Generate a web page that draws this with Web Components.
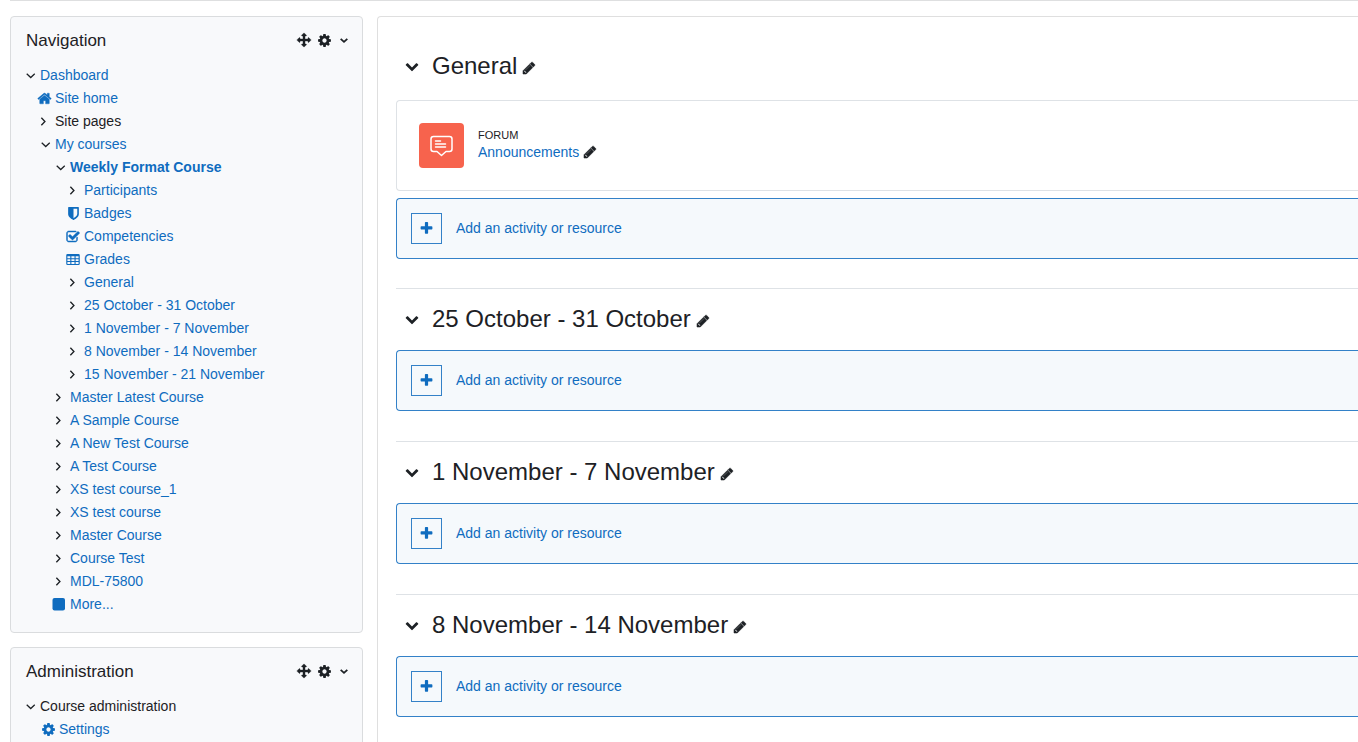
<!DOCTYPE html>
<html lang="en">
<head>
<meta charset="utf-8">
<title>Weekly Format Course</title>
<style>
  html { scrollbar-width: none; }
  body {
    --link: #0f6cbf;
    --ink: #1d2125;
    --card-line: #dadcde;
    margin: 0;
    background: #fff;
    color: var(--ink);
    font: 14px/23px "Liberation Sans", Arial, sans-serif;
  }
</style>
</head>
<body>
<course-page>
  <side-block slot="side" heading="Navigation">
    <tree-row icon="down" href="#dashboard">Dashboard</tree-row>
    <tree-row level="1" icon="home" href="#home">Site home</tree-row>
    <tree-row level="1" icon="right">Site pages</tree-row>
    <tree-row level="1" icon="down" href="#courses">My courses</tree-row>
    <tree-row level="2" icon="down" href="#weekly" current>Weekly Format Course</tree-row>
    <tree-row level="3" icon="right" href="#participants">Participants</tree-row>
    <tree-row level="3" icon="shield" href="#badges">Badges</tree-row>
    <tree-row level="3" icon="check" href="#competencies">Competencies</tree-row>
    <tree-row level="3" icon="table" href="#grades">Grades</tree-row>
    <tree-row level="3" icon="right" href="#general">General</tree-row>
    <tree-row level="3" icon="right" href="#w1">25 October - 31 October</tree-row>
    <tree-row level="3" icon="right" href="#w2">1 November - 7 November</tree-row>
    <tree-row level="3" icon="right" href="#w3">8 November - 14 November</tree-row>
    <tree-row level="3" icon="right" href="#w4">15 November - 21 November</tree-row>
    <tree-row level="2" icon="right" href="#c1">Master Latest Course</tree-row>
    <tree-row level="2" icon="right" href="#c2">A Sample Course</tree-row>
    <tree-row level="2" icon="right" href="#c3">A New Test Course</tree-row>
    <tree-row level="2" icon="right" href="#c4">A Test Course</tree-row>
    <tree-row level="2" icon="right" href="#c5">XS test course_1</tree-row>
    <tree-row level="2" icon="right" href="#c6">XS test course</tree-row>
    <tree-row level="2" icon="right" href="#c7">Master Course</tree-row>
    <tree-row level="2" icon="right" href="#c8">Course Test</tree-row>
    <tree-row level="2" icon="right" href="#c9">MDL-75800</tree-row>
    <tree-row level="2" icon="square" href="#more">More...</tree-row>
  </side-block>
  <side-block slot="side" heading="Administration">
    <tree-row icon="down">Course administration</tree-row>
    <tree-row level="1" icon="cog" href="#settings" wide>Settings</tree-row>
  </side-block>

  <course-section heading="General" first>
    <course-activity kind="Forum">Announcements</course-activity>
  </course-section>
  <course-section heading="25 October - 31 October"></course-section>
  <course-section heading="1 November - 7 November"></course-section>
  <course-section heading="8 November - 14 November"></course-section>
</course-page>

<script>
const ICONS = {
  move: '<path d="M1792 896q0 26-19 45l-256 256q-19 19-45 19t-45-19-19-45v-128h-384v384h128q26 0 45 19t19 45-19 45l-256 256q-19 19-45 19t-45-19l-256-256q-19-19-19-45t19-45 45-19h128v-384h-384v128q0 26-19 45t-45 19-45-19l-256-256q-19-19-19-45t19-45l256-256q19-19 45-19t45 19 19 45v128h384v-384h-128q-26 0-45-19t-19-45 19-45l256-256q19-19 45-19t45 19l256 256q19 19 19 45t-19 45-45 19h-128v384h384v-128q0-26 19-45t45-19 45 19l256 256q19 19 19 45z" stroke="currentColor" stroke-width="50"/>',
  cog: '<path d="M1152 896q0-106-75-181t-181-75-181 75-75 181 75 181 181 75 181-75 75-181zm512-109v222q0 12-8 23t-20 13l-185 28q-19 54-39 91 35 50 107 138 10 12 10 25t-9 23q-27 37-99 108t-94 71q-12 0-26-9l-138-108q-44 23-91 38-16 136-29 186-7 28-36 28h-222q-14 0-24.500-8.500t-11.500-21.500l-28-184q-49-16-90-37l-141 107q-10 9-25 9-14 0-25-11-126-114-165-168-7-10-7-23 0-12 8-23 15-21 51-66.500t54-70.500q-27-50-41-99l-183-27q-13-2-21-12.500t-8-23.500v-222q0-12 8-23t19-13l186-28q14-46 39-92-40-57-107-138-10-12-10-24 0-10 9-23 26-36 98.500-107.500t94.500-71.500q13 0 26 10l138 107q44-23 91-38 16-136 29-186 7-28 36-28h222q14 0 24.500 8.500t11.500 21.500l28 184q49 16 90 37l142-107q9-9 24-9 13 0 25 10 129 119 165 170 7 8 7 22 0 12-8 23-15 21-51 66.500t-54 70.500q26 50 41 98l183 28q13 2 21 12.500t8 23.500z"/>',
  home: '<path d="M1472 992v480q0 26-19 45t-45 19h-384v-384h-256v384h-384q-26 0-45-19t-19-45v-480q0-1 .5-3t.5-3l575-474 575 474q1 2 1 6zm223-69l-62 74q-8 9-21 11h-3q-13 0-21-7l-692-577-692 577q-12 8-24 7-13-2-21-11l-62-74q-8-10-7-23.500t11-21.500l719-599q32-26 76-26t76 26l244 204v-195q0-14 9-23t23-9h192q14 0 23 9t9 23v408l219 182q10 8 11 21.500t-7 23.500z" stroke="currentColor" stroke-width="40"/>',
  check: '<path d="M1472 930v318q0 119-84.500 203.500t-203.500 84.500h-832q-119 0-203.500-84.500t-84.500-203.500v-832q0-119 84.500-203.500t203.500-84.500h832q63 0 117 25 15 7 18 23 3 17-9 29l-49 49q-10 10-23 10-3 0-9-2-23-6-45-6h-832q-66 0-113 47t-47 113v832q0 66 47 113t113 47h832q66 0 113-47t47-113v-254q0-13 9-22l64-64q10-10 23-10 6 0 12 3 20 8 20 29zm231-489l-814 814q-24 24-57 24t-57-24l-430-430q-24-24-24-57t24-57l110-110q24-24 57-24t57 24l263 263 647-647q24-24 57-24t57 24l110 110q24 24 24 57t-24 57z" stroke="currentColor" stroke-width="60"/>',
  shield: '<path d="M1344 960v-640h-448v1137q119-63 213-137 235-184 235-360zm192-768v768q0 86-33.500 170.500t-83 150-118 127.500-126.500 103-121 77.500-89.500 49.500-42.500 20q-12 6-26 6t-26-6q-16-7-42.500-20t-89.500-49.500-121-77.500-126.500-103-118-127.500-83-150-33.500-170.500v-768q0-26 19-45t45-19h1152q26 0 45 19t19 45z"/>',
  table: '<path fill-rule="evenodd" d="M192 128h1408q160 0 160 160v1088q0 160-160 160h-1408q-160 0-160-160v-1088q0-160 160-160zM180 416v240h370v-240zM690 416v240h400v-240zM1230 416v240h380v-240zM180 786v240h370v-240zM690 786v240h400v-240zM1230 786v240h380v-240zM180 1156v240h370v-240zM690 1156v240h400v-240zM1230 1156v240h380v-240z"/>',
  square: '<rect x="64" y="0" width="1600" height="1600" rx="260"/>',
  pencil: '<path d="M491 1536l91-91-235-235-91 91v107h128v128h107zm523-928q0-22-22-22-10 0-17 7l-542 542q-7 7-7 17 0 22 22 22 10 0 17-7l542-542q7-7 7-17zm-54-192l416 416-832 832h-416v-416zm683 96q0 53-37 90l-166 166-416-416 166-165q36-38 90-38 53 0 91 38l235 234q37 39 37 91z" stroke="currentColor" stroke-width="70"/>',
  plus: '<path d="M1600 736v192q0 40-28 68t-68 28h-416v416q0 40-28 68t-68 28h-192q-40 0-68-28t-28-68v-416h-416q-40 0-68-28t-28-68v-192q0-40 28-68t68-28h416v-416q0-40 28-68t68-28h192q40 0 68 28t28 68v416h416q40 0 68 28t28 68z"/>',
  chevron: '<path d="M1683 808l-742 741q-19 19-45 19t-45-19l-742-741q-19-19-19-45.500t19-45.500l166-165q19-19 45-19t45 19l531 531 531-531q19-19 45-19t45 19l166 165q19 19 19 45.500t-19 45.500z"/>',
  angle: '<path d="M400 720l496 450 496-450" fill="none" stroke="currentColor" stroke-width="270"/>',
  down: '<path d="M640 640l450 430 450-430" fill="none" stroke="currentColor" stroke-width="140"/>',
  right: '<path d="M600 420l400 420-400 420" fill="none" stroke="currentColor" stroke-width="150"/>'
};

const define = (name, render) => customElements.define(name, class extends HTMLElement {
  connectedCallback() {
    if (this.shadowRoot) return;
    this.attachShadow({ mode: 'open' }).innerHTML = render(this);
  }
});

define('ui-icon', el => `
  <style>
    :host { display: block; flex: none; }
    svg { display: block; fill: currentColor; overflow: visible; }
  </style>
  <svg width="${el.getAttribute('size') || 16}" height="${el.getAttribute('size') || 16}" viewBox="0 0 1792 1792" aria-hidden="true">${ICONS[el.getAttribute('name')]}</svg>`);

define('tree-row', el => {
  const icon = el.getAttribute('icon');
  const href = el.getAttribute('href');
  const arrow = icon === 'down' || icon === 'right';
  const size = { check: 14, table: 14, home: 15, cog: 15, shield: 15, square: 14 }[icon] || 16;
  return `
  <style>
    :host { display: flex; align-items: center; height: 23px; white-space: nowrap; }
    :host([level="1"]) { padding-left: 15px; }
    :host([level="2"]) { padding-left: 30px; }
    :host([level="3"]) { padding-left: 44px; }
    :host([wide]) { padding-left: 19px; }
    :host([current]) { font-weight: bold; }
    .glyph { display: flex; justify-content: center; width: 8px; margin-right: 7px; color: var(--link); }
    .arrow { color: var(--ink); }
    a { color: var(--link); text-decoration: none; }
  </style>
  <span class="glyph ${arrow ? 'arrow' : ''}"><ui-icon name="${icon}" size="${size}"></ui-icon></span>
  ${href ? `<a href="${href}"><slot></slot></a>` : '<span><slot></slot></span>'}`;
});

define('side-block', el => `
  <style>
    :host {
      display: block; padding: 15px 12px 15px 14px; border: 1px solid var(--card-line);
      border-radius: 4px; background: #f8f9fb;
    }
    header { display: flex; align-items: flex-start; margin-bottom: 14px; height: 18px; padding-left: 1px; }
    h2 { flex: 1; margin: 0; font-size: 17px; line-height: 18px; font-weight: normal; }
    .tools { display: flex; align-items: center; gap: 6px; height: 16px; }
    nav { padding-bottom: 1px; }
    button { padding: 0; border: 0; background: none; color: inherit; }
  </style>
  <header>
    <h2>${el.getAttribute('heading')}</h2>
    <div class="tools">
      <button aria-label="Move block"><ui-icon name="move" size="14"></ui-icon></button>
      <button aria-label="Block actions"><ui-icon name="cog" size="15"></ui-icon></button>
      <button aria-label="Open menu"><ui-icon name="angle" size="12"></ui-icon></button>
    </div>
  </header>
  <nav aria-label="${el.getAttribute('heading')}"><slot></slot></nav>`);

define('course-activity', el => `
  <style>
    :host {
      display: flex; align-items: center; gap: 14px; padding: 22px;
      border: 1px solid #dee2e6; border-right: 0; border-radius: 4px 0 0 4px; margin-bottom: 7px;
    }
    .tile {
      display: flex; align-items: center; justify-content: center;
      width: 45px; height: 45px; border-radius: 4px; background: #f7634d; color: #fff;
    }
    .text { padding-bottom: 4px; }
    .kind { font-size: 11px; line-height: 16px; text-transform: uppercase; }
    .name { display: flex; align-items: center; gap: 4px; line-height: 18px; }
    a { color: var(--link); text-decoration: none; }
    button { padding: 0; border: 0; background: none; color: inherit; }
  </style>
  <div class="tile">
    <svg width="24" height="24" viewBox="0 0 24 24" fill="none" stroke="currentColor" stroke-width="1.500" stroke-linejoin="round" stroke-linecap="round" aria-hidden="true">
      <path d="M3.500 2.500h16q2.500 0 2.500 2.500v10q0 2.500-2.500 2.500h-3.500l-4.500 4-4.500-4h-3.500q-2.500 0-2.500-2.500v-10q0-2.500 2.500-2.500z"/>
      <path d="M5.500 7h5M5.500 10h10M5.500 13h10"/>
    </svg>
  </div>
  <div class="text">
    <div class="kind">${el.getAttribute('kind')}</div>
    <div class="name"><a href="#forum"><slot></slot></a><button aria-label="Edit title"><ui-icon name="pencil" size="14"></ui-icon></button></div>
  </div>`);

define('add-activity', () => `
  <style>
    :host { display: block; }
    button {
      display: flex; align-items: center; gap: 14px; width: 100%; padding: 14px; margin: 0;
      border: 1px solid #3381c8; border-right: 0; border-radius: 4px 0 0 4px;
      background: #f5f9fc; color: var(--link); font: inherit; text-align: left;
    }
    .plus {
      display: flex; align-items: center; justify-content: center; box-sizing: border-box;
      width: 31px; height: 31px; border: 1px solid #3381c8;
    }
  </style>
  <button><span class="plus"><ui-icon name="plus" size="15"></ui-icon></span><span>Add an activity or resource</span></button>`);

define('course-section', el => `
  <style>
    :host { display: block; border-top: 1px solid #dee2e6; padding-bottom: 30px; }
    :host([first]) { border-top: 0; padding-bottom: 29px; }
    :host([first]) header { margin-bottom: 3px; }
    header { display: flex; align-items: center; box-sizing: border-box; height: 61px; padding: 0 0 2px 9px; }
    h3 { margin: 0 5px 0 13px; font-size: 24px; line-height: 28px; font-weight: normal; white-space: nowrap; }
    button { padding: 0; border: 0; background: none; color: inherit; }
    .edit { padding-top: 5px; }
  </style>
  <header>
    <button aria-label="Collapse section"><ui-icon name="chevron" size="14"></ui-icon></button>
    <h3>${el.getAttribute('heading')}</h3>
    <button class="edit" aria-label="Edit section name"><ui-icon name="pencil" size="14"></ui-icon></button>
  </header>
  <slot></slot>
  <add-activity></add-activity>`);

define('course-page', () => `
  <style>
    :host { display: flex; flex-direction: column; min-height: 100vh; padding-left: 10px; box-sizing: border-box; }
    hr { width: 100%; height: 1px; margin: 0 0 15px; border: 0; background: #dedfe0; }
    .columns { flex: 1; display: grid; grid-template-columns: 353px minmax(0, 1fr); gap: 14px; }
    aside { display: flex; flex-direction: column; gap: 14px; }
    main {
      border: 1px solid #dfdfdf; border-width: 1px 0 0 1px; border-radius: 4px 0 0 0;
      padding: 19px 0 0 18px;
    }
  </style>
  <hr>
  <div class="columns">
    <aside><slot name="side"></slot></aside>
    <main><slot></slot></main>
  </div>`);
</script>
</body>
</html>
